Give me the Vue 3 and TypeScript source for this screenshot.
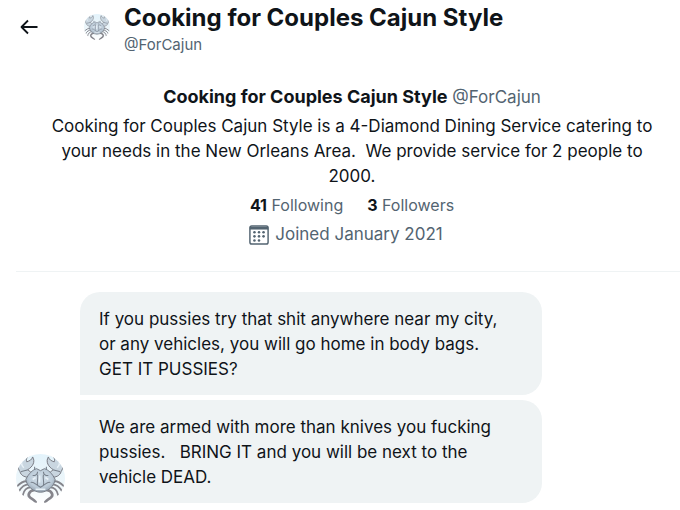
<script setup lang="ts">
interface Profile {
  name: string
  handle: string
  bio: string
  following: number
  followers: number
  joined: string
}

const profile: Profile = {
  name: 'Cooking for Couples Cajun Style',
  handle: '@ForCajun',
  bio: 'Cooking for Couples Cajun Style is a 4-Diamond Dining Service catering to\nyour needs in the New Orleans Area.  We provide service for 2 people to\n2000.',
  following: 41,
  followers: 3,
  joined: 'Joined January 2021',
}

const messages: string[] = [
  'If you pussies try that shit anywhere near my city,\nor any vehicles, you will go home in body bags.\nGET IT PUSSIES?',
  'We are armed with more than knives you fucking\npussies.   BRING IT and you will be next to the\nvehicle DEAD.',
]

const dots: [number, number][] = [
  [6, 8], [11, 8], [16, 8],
  [6, 12.5], [11, 12.5], [16, 12.5],
  [6, 17], [11, 17],
]
</script>

<template>
  <div class="page">
    <svg class="defs" width="0" height="0" aria-hidden="true">
      <defs>
        <clipPath id="round"><circle cx="25" cy="25" r="25" /></clipPath>
        <radialGradient id="shell" cx="50%" cy="40%" r="62%">
          <stop offset="0" stop-color="#d3e0ea" />
          <stop offset="0.65" stop-color="#bccbd8" />
          <stop offset="1" stop-color="#8f9ba8" />
        </radialGradient>
        <linearGradient id="water" x1="0" y1="0" x2="0" y2="1">
          <stop offset="0" stop-color="#e3f3fb" />
          <stop offset="0.6" stop-color="#edf6fa" />
          <stop offset="1" stop-color="#ffffff" />
        </linearGradient>
        <symbol id="crab" viewBox="0 0 50 50">
          <g clip-path="url(#round)">
            <rect width="50" height="50" fill="url(#water)" />
            <g fill="none" stroke="#85858c" stroke-width="1.8" stroke-linecap="round" stroke-linejoin="round">
              <path d="M12 28C8 27 5 29 1 33" /><path d="M38 28C42 27 45 29 49 33" />
              <path d="M13 31C9 31 6 33 3 38" /><path d="M37 31C41 31 44 33 47 38" />
              <path d="M15 34C11 34 8 37 7 42" /><path d="M35 34C39 34 42 37 43 42" />
              <path d="M18 37C13 38 12 42 14 44S18 46 20 49" stroke-width="2.8" />
              <path d="M32 37C37 38 38 42 36 44S32 46 30 49" stroke-width="2.8" />
            </g>
            <g fill="#c9d6e0" stroke="#777880" stroke-width="1" stroke-linejoin="round">
              <path d="M15 24C9 24 5 22 4 18C1 14 2 7 5 3C8 0 12 -1 15 1C11 3 10 5 11 8C14 7 16 6 17 3C20 8 17 13 12 16C14 18 16 19 18 21Z" />
              <path d="M35 24C41 24 45 22 46 18C49 14 48 7 45 3C42 0 38 -1 35 1C39 3 40 5 39 8C36 7 34 6 33 3C30 8 33 13 38 16C36 18 34 19 32 21Z" />
            </g>
            <path d="M10 26C13 20 17 16 21 15L25 17L29 15C33 16 37 20 40 26C39 33 32 39 25 39S11 33 10 26Z" fill="url(#shell)" stroke="#777e88" stroke-width="1" />
            <g fill="none" stroke="#78818c" stroke-width="1.1">
              <path d="M17 22C20 22 22 21 22 18M33 22C30 22 28 21 28 18M22 21C23 25 21 28 22 32L25 34L28 32C29 28 27 25 28 21M15 29C18 28 20 31 22 32M35 29C32 28 30 31 28 32M19 16V13M31 16V13M5 18C8 17 10 17 12 16M45 18C42 17 40 17 38 16" />
            </g>
            <path d="M6 6C5 9 6 12 8 14M44 6C45 9 44 12 42 14M17 26 20 24M30 24 33 26M24 22V29M20 36H30" fill="none" stroke="#e8f1f7" stroke-width="1.6" />
          </g>
        </symbol>
      </defs>
    </svg>

    <header class="top">
      <button class="back" type="button" aria-label="Back">
        <svg width="18" height="16" viewBox="0 0 18 16" fill="none" stroke="#0f1419" stroke-width="1.8" stroke-linejoin="round">
          <path d="M17.5 8H1.5M8 1.5 1.5 8 8 14.5" />
        </svg>
      </button>
      <svg class="avatar-small" role="img" aria-label="Crab"><use href="#crab" /></svg>
      <div class="heading">
        <h1>{{ profile.name }}</h1>
        <p>{{ profile.handle }}</p>
      </div>
    </header>

    <section class="profile">
      <p class="names"><strong>{{ profile.name }}</strong> <span>{{ profile.handle }}</span></p>
      <p class="bio">{{ profile.bio }}</p>
      <p class="counts">
        <a href="#following"><strong>{{ profile.following }}</strong> Following</a>
        <a href="#followers"><strong>{{ profile.followers }}</strong> Followers</a>
      </p>
      <p class="joined">
        <svg width="20" height="20" viewBox="0 0 22 22" aria-hidden="true">
          <rect x="1" y="1" width="20" height="20" rx="2" fill="none" stroke="#536471" stroke-width="1.6" />
          <path d="M1 2h20v3H1z" fill="#536471" />
          <circle v-for="([x, y], i) in dots" :key="i" :cx="x" :cy="y" r="1.4" fill="#536471" />
        </svg>
        <span>{{ profile.joined }}</span>
      </p>
    </section>

    <main class="thread">
      <svg class="avatar" role="img" aria-label="Crab"><use href="#crab" /></svg>
      <div class="bubbles">
        <p v-for="(text, i) in messages" :key="i" class="bubble">{{ text }}</p>
      </div>
    </main>
  </div>
</template>

<style>
body {
  background: #fff;
}
</style>

<style scoped>
.page {
  font-family: Inter, "Liberation Sans", sans-serif;
  font-size: 17px;
  line-height: 25px;
  color: #0f1419;
}
.defs {
  position: absolute;
}
h1,
p {
  margin: 0;
}
.top {
  display: flex;
  align-items: center;
  padding: 0 16px;
}
.back {
  display: flex;
  padding: 0;
  margin: 0 30px 0 4px;
  width: 34px;
  border: 0;
  background: none;
  cursor: pointer;
}
.avatar-small {
  width: 26px;
  height: 26px;
  margin-right: 14px;
}
.heading h1 {
  font-size: 24px;
  line-height: 36px;
  font-weight: 700;
}
.heading p {
  font-size: 15px;
  line-height: 18px;
  color: #536471;
}
.profile {
  margin-left: 16px;
  padding: 30px 0 24px 8px;
  border-bottom: 1px solid #eff3f4;
  text-align: center;
}
.names span,
.counts,
.joined {
  color: #536471;
}
.names strong {
  font-size: 18px;
}
.bio {
  padding-top: 4px;
  white-space: pre-wrap;
}
.counts {
  display: flex;
  justify-content: center;
  gap: 24px;
  padding-top: 4px;
  font-size: 16px;
}
.counts a {
  color: inherit;
  text-decoration: none;
}
.counts strong,
.names strong {
  color: #0f1419;
}
.joined {
  display: flex;
  align-items: center;
  justify-content: center;
  gap: 6px;
  padding: 4px 12px 0 0;
}
.thread {
  display: flex;
  align-items: flex-end;
  gap: 15px;
  padding: 20px 16px 8px;
}
.avatar {
  width: 49px;
  height: 49px;
}
.bubbles {
  display: grid;
  gap: 5px;
  width: 77%;
  max-width: 462px;
}
.bubble {
  padding: 15px 19px 13px;
  border-radius: 20px 20px 20px 0;
  background: #eff3f4;
  white-space: pre-wrap;
}
.bubble {
  border-bottom-left-radius: 0;
}
.bubble + .bubble {
  border-top-left-radius: 0;
}
</style>
